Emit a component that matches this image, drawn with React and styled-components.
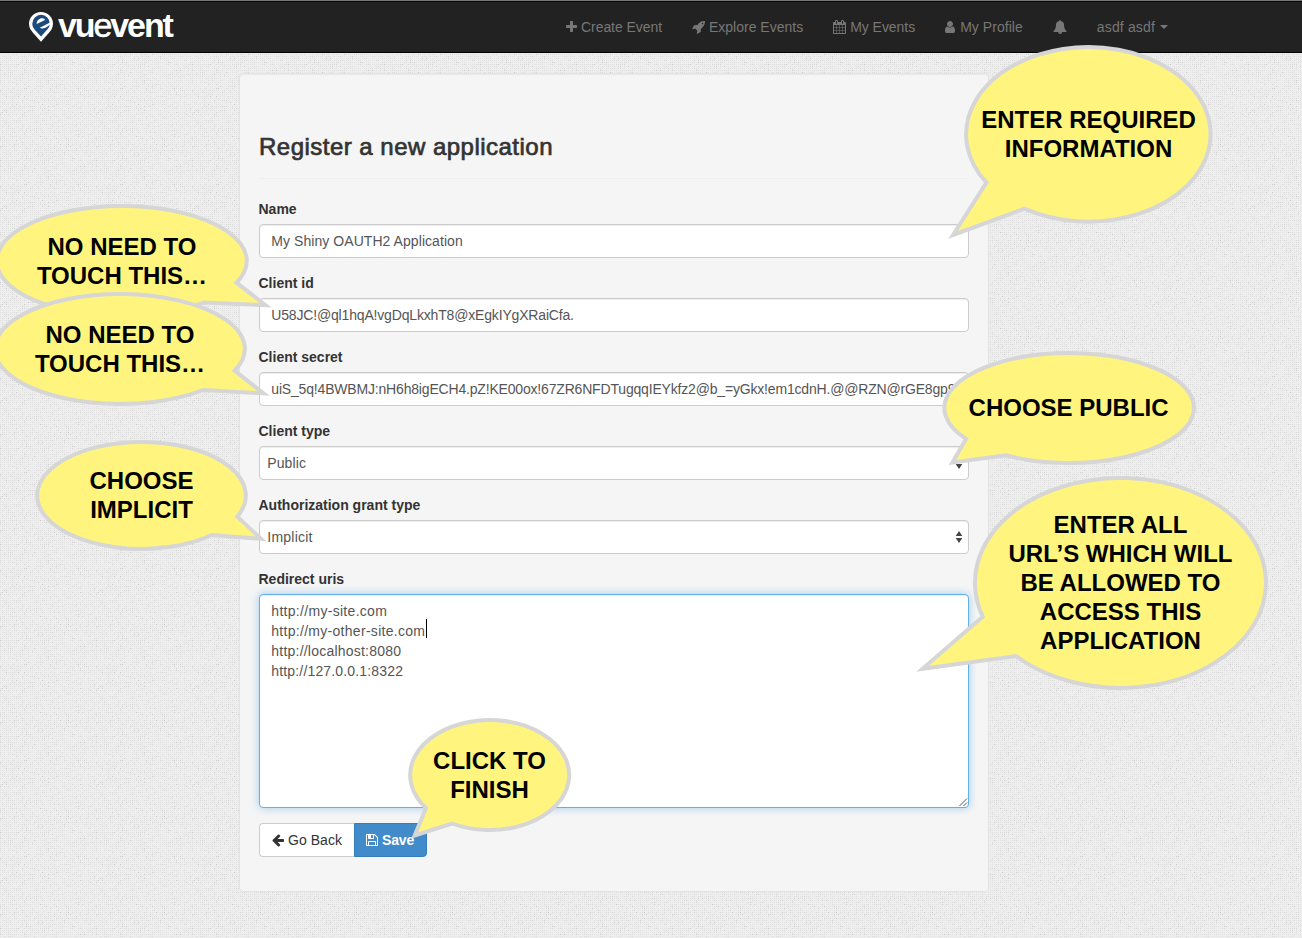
import React from "react";
import styled, { createGlobalStyle } from "styled-components";

const Global = createGlobalStyle`
  *, *::before, *::after { box-sizing: border-box; }
  html, body { margin: 0; padding: 0; }
  body {
    font-family: "Liberation Sans", Arial, sans-serif;
    font-size: 14px;
    line-height: 20px;
    color: #333;
    overflow: hidden;
  }
`;

const Page = styled.div`
  position: relative;
  width: 1302px;
  height: 938px;
  overflow: hidden;
  background: #eeeeee;
  isolation: isolate;
`;

const TextureLayer = styled.svg`
  position: absolute;
  inset: 0;
  z-index: -1;
  width: 100%;
  height: 100%;
`;

const Navbar = styled.header`
  display: flex;
  align-items: center;
  height: 53px;
  padding-left: 28px;
  background: #222;
  border-top: 1px solid #757775;
  border-bottom: 1px solid #000;
  box-shadow: inset 0 1px 0 #080808;
`;

const Brand = styled.div`
  display: flex;
  width: 523px;
  height: 34px;
  color: #fff;
`;

const LogoMark = styled.svg`
  width: 26px;
  height: 32px;
  margin-top: 1px;
`;

const BrandName = styled.div`
  margin-left: 4px;
  font-size: 34px;
  line-height: 30px;
  font-weight: 700;
  letter-spacing: -2.1px;
`;

const Thin = styled.span`
  font-weight: 400;
  -webkit-text-stroke: 0.5px #fff;
`;

const NavLink = styled.a`
  display: flex;
  align-items: center;
  padding: 0 15px;
  height: 50px;
  gap: 4px;
  color: #777;
  white-space: nowrap;
  letter-spacing: ${(p) => p.$ls || 0}px;
`;

const Glyph = styled.svg`
  display: block;
  flex: none;
  height: 14px;
  width: ${(p) => p.$w}px;
  fill: currentColor;
`;

const Caret = styled.i`
  border: 4px solid transparent;
  border-top-color: currentColor;
  border-bottom: 0;
  margin-left: 1px;
`;

const Well = styled.main`
  width: 750px;
  margin: 20px 0 0 239px;
  padding: 60px 19px 34px;
  background: #f5f5f5;
  border: 1px solid #e3e3e3;
  border-radius: 4px;
  box-shadow: inset 0 1px 1px rgba(0, 0, 0, 0.05);
`;

const Heading = styled.h3`
  margin: 0 0 20px;
  padding-bottom: 18px;
  border-bottom: 1px solid #eee;
  font-size: 24px;
  line-height: 26px;
  font-weight: 400;
  -webkit-text-stroke: 0.7px #333;
  letter-spacing: ${(p) => p.$ls || 0}px;
`;

const Field = styled.div`
  margin-bottom: 15px;
`;

const Label = styled.div`
  margin: 0 0 5px -0.5px;
  font-weight: 700;
  letter-spacing: ${(p) => p.$ls || 0}px;
`;

const Control = styled.div`
  display: flex;
  align-items: center;
  justify-content: space-between;
  height: 34px;
  padding: 0 ${(p) => (p.$select ? "5px 0 7.3px" : "11.3px")};
  overflow: hidden;
  white-space: nowrap;
  color: #555;
  background: #fff;
  border: 1px solid #ccc;
  border-radius: 4px;
  box-shadow: inset 0 1px 1px rgba(0, 0, 0, 0.075);
  letter-spacing: ${(p) => p.$ls || 0}px;
`;

const Area = styled.div`
  display: flex;
  justify-content: space-between;
  height: 214px;
  padding: 6px 0 0 11.3px;
  color: #555;
  background: #fff;
  border: 1px solid #66afe9;
  border-radius: 4px;
  box-shadow: inset 0 1px 1px rgba(0, 0, 0, 0.075), 0 0 8px rgba(102, 175, 233, 0.6);
`;

const UrlLine = styled.div`
  display: flex;
  letter-spacing: ${(p) => p.$ls || 0}px;
`;

const TextCursor = styled.span`
  width: 1px;
  height: 19px;
  margin: -2px 0 0 1px;
  background: #000;
`;

const Grip = styled.svg`
  align-self: flex-end;
  width: 9px;
  height: 9px;
  stroke: #555;
`;

const Buttons = styled.div`
  display: flex;
`;

const Button = styled.button`
  display: flex;
  align-items: center;
  justify-content: flex-start;
  gap: 4px;
  width: ${(p) => p.$w}px;
  height: 34px;
  padding: 0 0 0 ${(p) => (p.$primary ? 11 : 12)}px;
  font: inherit;
  font-weight: ${(p) => (p.$primary ? 700 : 400)};
  letter-spacing: ${(p) => p.$ls || 0}px;
  color: ${(p) => (p.$primary ? "#fff" : "#333")};
  background: ${(p) => (p.$primary ? "#428bca" : "#fff")};
  border: 1px solid ${(p) => (p.$primary ? "#357ebd" : "#ccc")};
  border-right-width: ${(p) => (p.$primary ? 1 : 0)}px;
  border-radius: ${(p) => (p.$primary ? "0 4px 4px 0" : "4px 0 0 4px")};
`;

const BubbleShape = styled.svg`
  position: absolute;
  inset: 0;
  width: 1302px;
  height: 938px;
  pointer-events: none;
  fill: #fff57e;
  stroke: #d6d6d6;
  stroke-width: 4px;
  stroke-miterlimit: 10;
`;

const BubbleText = styled.div`
  position: absolute;
  left: ${(p) => p.$x}px;
  top: ${(p) => p.$y}px;
  transform: translateX(-50%);
  font-size: 24px;
  line-height: 29px;
  font-weight: 700;
  color: #000;
  text-align: center;
  white-space: pre;
`;

const ICONS = {
  plus: [11, 192, "M1600 736v192q0 40-28 68t-68 28h-416v416q0 40-28 68t-68 28h-192q-40 0-68-28t-28-68v-416h-416q-40 0-68-28t-28-68v-192q0-40 28-68t68-28h416v-416q0-40 28-68t68-28h192q40 0 68 28t28 68v416h416q40 0 68 28t28 68z"],
  rocket: [13, 0, "M1440 448q0-40-28-68t-68-28-68 28-28 68 28 68 68 28 68-28 28-68zm224-288q0 249-75.500 430.500t-253.500 360.500q-81 80-195 176l-20 379q-2 16-16 26l-384 224q-7 4-16 4-12 0-23-9l-64-64q-13-14-8-32l85-276-281-281-276 85q-3 1-9 1-14 0-23-9l-64-64q-17-19-5-39l224-384q10-14 26-16l379-20q96-114 176-195 188-187 358-258t431-71q14 0 24 9.500t10 22.500z"],
  calendar: [13, 64, "M192 1664h288v-288h-288v288zm352 0h320v-288h-320v288zm-352-352h288v-320h-288v320zm352 0h320v-320h-320v320zm-352-384h288v-288h-288v288zm736 736h320v-288h-320v288zm-384-736h320v-288h-320v288zm768 736h288v-288h-288v288zm-384-352h320v-320h-320v320zm-352-864v-288q0-13-9.500-22.500t-22.500-9.500h-64q-13 0-22.500 9.500t-9.500 22.500v288q0 13 9.500 22.500t22.500 9.500h64q13 0 22.500-9.500t9.500-22.500zm736 864h288v-320h-288v320zm-384-384h320v-288h-320v288zm384 0h288v-288h-288v288zm32-480v-288q0-13-9.500-22.500t-22.500-9.500h-64q-13 0-22.500 9.500t-9.500 22.500v288q0 13 9.500 22.500t22.500 9.500h64q13 0 22.500-9.500t9.500-22.500zm384-64v1280q0 52-38 90t-90 38h-1408q-52 0-90-38t-38-90v-1280q0-52 38-90t90-38h128v-96q0-66 47-113t113-47h64q66 0 113 47t47 113v96h384v-96q0-66 47-113t113-47h64q66 0 113 47t47 113v96h128q52 0 90 38t38 90z"],
  user: [11, 256, "M1536 1399q0 109-62.500 187t-150.500 78h-854q-88 0-150.500-78t-62.500-187q0-85 8.500-160.500t31.500-152 58.500-131 94-89 134.500-34.500q131 128 313 128t313-128q76 0 134.500 34.500t94 89 58.500 131 31.500 152 8.500 160.500zm-256-887q0 159-112.500 271.500t-271.500 112.500-271.500-112.500-112.500-271.500 112.500-271.500 271.500-112.500 271.500 112.500 112.500 271.500z"],
  bell: [14, 0, "M912 1696q0-16-16-16-59 0-101.500-42.500t-42.500-101.500q0-16-16-16t-16 16q0 73 51.500 124.500t124.500 51.500q16 0 16-16zm816-288q0 52-38 90t-90 38h-448q0 106-75 181t-181 75-181-75-75-181h-448q-52 0-90-38t-38-90q50-42 91-88t85-119.500 74.500-158.500 50-206 19.500-260q0-152 117-282.500t307-158.500q-8-19-8-39 0-40 28-68t68-28 68 28 28 68q0 20-8 39 190 28 307 158.500t117 282.500q0 139 19.500 260t50 206 74.500 158.500 85 119.500 91 88z"],
  back: [12, 128, "M1664 896v128q0 53-32.500 90.500t-84.500 37.500h-704l293 294q38 36 38 90t-38 90l-75 76q-37 37-90 37-52 0-91-37l-651-652q-37-37-37-90 0-52 37-91l651-650q38-38 91-38 52 0 90 38l75 74q38 38 38 91t-38 91l-293 293h704q52 0 84.500 37.500t32.500 90.500z"],
  save: [12, 128, "M512 1536h768v-384h-768v384zm896 0h128v-896q0-14-10-38.500t-20-34.500l-281-281q-10-10-34-20t-39-10v416q0 40-28 68t-68 28h-576q-40 0-68-28t-28-68v-416h-128v1280h128v-416q0-40 28-68t68-28h832q40 0 68 28t28 68v416zm-384-928v-320q0-13-9.500-22.500t-22.500-9.500h-192q-13 0-22.500 9.500t-9.500 22.500v320q0 13 9.500 22.500t22.500 9.500h192q13 0 22.500-9.500t9.500-22.500zm640 32v928q0 40-28 68t-68 28h-1344q-40 0-68-28t-28-68v-1344q0-40 28-68t68-28h928q40 0 88 20t76 48l280 280q28 28 48 76t20 88z"],
};

function Icon({ name }) {
  const [w, x, d] = ICONS[name];
  return (
    <Glyph $w={w} viewBox={`${x} 0 ${w * 128} 1792`}>
      <path d={d} />
    </Glyph>
  );
}

/* Woven paper: a 2px lattice of single-pixel specks in four strengths. */
const TILE = 96;
const SHADES = [0.02, 0.05, 0.085, 0.15];
const specks = SHADES.map(() => "");
let seed = 7;
for (let y = 0; y < TILE; y += 2) {
  for (let x = 0; x < TILE; x += 2) {
    seed = (seed * 1103515245 + 12345) % 2147483648;
    const r = seed / 2147483648;
    const level = r < 0.3 ? 0 : r < 0.7 ? 1 : r < 0.94 ? 2 : 3;
    specks[level] += `M${x} ${y}h1v1h-1z`;
  }
}

function Texture() {
  return (
    <TextureLayer shapeRendering="crispEdges">
      <defs>
        <pattern id="weave" width={TILE} height={TILE} patternUnits="userSpaceOnUse">
          {specks.map((d, i) => <path key={i} d={d} fillOpacity={SHADES[i]} />)}
        </pattern>
      </defs>
      <rect width="100%" height="100%" fill="url(#weave)" />
    </TextureLayer>
  );
}

function Logo() {
  return (
    <LogoMark viewBox="0 0 26 32">
      <path d="M13 1C6.200 1 1 6.200 1 12.800c0 4 2 6.700 4.200 9.200L13 30.700l7.800-8.700c2.200-2.500 4.200-5.200 4.200-9.200C25 6.200 19.800 1 13 1z" fill="#fff" />
      <path d="M13.200 3.800a8.800 8.800 0 0 0-8.900 8.900c0 2.700 1.300 4.700 2.900 6.500L13 25.400l5.800-6.300c1.700-1.900 3-3.700 3-6.400a8.800 8.800 0 0 0-8.600-8.900z" fill="#1d4a7c" />
      <path d="M8.700 12.900C8.300 9.800 11.600 6.900 14.400 7.200c1.500.2 2.300.9 2.600 1.700z" fill="#fff" />
      <path d="M23 11 11.800 16.700c1.700 1.400 5.300.6 7.700-1.200L23 13z" fill="#fff" />
    </LogoMark>
  );
}

const Stepper = () => (
  <svg width="8" height="14" viewBox="0 0 8 14" fill="#444">
    <path d="M0.700 6 4 1l3.300 5zM0.700 8l3.300 5 3.300-5z" />
  </svg>
);

const BUBBLES = [
  { rx: 125, ry: 55, a: [236.5, 282.7], tip: [265.5, 305.3], b: [203.5, 302.5], x: 122, y: 232, text: "NO NEED TO\nTOUCH THIS…", right: true },
  { rx: 125, ry: 54.9, a: [234.7, 370.7], tip: [263.5, 393.3], b: [203, 390], x: 120, y: 320, text: "NO NEED TO\nTOUCH THIS…", right: true },
  { rx: 104.3, ry: 53.5, a: [237.3, 516.6], tip: [261, 538.8], b: [211.7, 535], x: 141.5, y: 466, text: "CHOOSE\nIMPLICIT", right: true },
  { rx: 122.2, ry: 87.3, a: [986.5, 182.6], tip: [953, 235], b: [1024.3, 208.7], x: 1088.5, y: 105, text: "ENTER REQUIRED\nINFORMATION" },
  { rx: 145.5, ry: 105, a: [982.7, 616.7], tip: [922.5, 668.8], b: [1016, 656], x: 1120.5, y: 510, text: "ENTER ALL\nURL’S WHICH WILL\nBE ALLOWED TO\nACCESS THIS\nAPPLICATION" },
  { rx: 124.8, ry: 55, a: [966, 438.9], tip: [952.5, 462.5], b: [1005.7, 455.3], x: 1068.6, y: 393, text: "CHOOSE PUBLIC" },
  { rx: 79.5, ry: 55, a: [426, 808], tip: [414.7, 835.5], b: [452, 823.5], x: 489.5, y: 746, text: "CLICK TO\nFINISH" },
];

function Bubble({ rx, ry, a, b, tip, x, y, text, right }) {
  return (
    <>
      <BubbleShape viewBox="0 0 1302 938">
        <path d={`M${a}A${rx} ${ry} 0 1 ${right ? 0 : 1} ${b}L${tip}Z`} />
      </BubbleShape>
      <BubbleText $x={x} $y={y}>{text}</BubbleText>
    </>
  );
}

export default function App() {
  return (
    <Page>
      <Global />
      <Texture />
      <Navbar>
        <Brand>
          <Logo />
          <BrandName>vu<Thin>e</Thin>vent</BrandName>
        </Brand>
        <NavLink $ls={-0.06}><Icon name="plus" /><span>Create Event</span></NavLink>
        <NavLink><Icon name="rocket" /><span>Explore Events</span></NavLink>
        <NavLink $ls={-0.04}><Icon name="calendar" /><span>My Events</span></NavLink>
        <NavLink $ls={0.04}><Icon name="user" /><span>My Profile</span></NavLink>
        <NavLink><Icon name="bell" /></NavLink>
        <NavLink $ls={0.15}><span>asdf asdf</span><Caret /></NavLink>
      </Navbar>
      <Well>
        <Heading $ls={0.48}>Register a new application</Heading>
        <Field>
          <Label>Name</Label>
          <Control $ls={0.06}>My Shiny OAUTH2 Application</Control>
        </Field>
        <Field>
          <Label>Client id</Label>
          <Control $ls={-0.17}>U58JC!@ql1hqA!vgDqLkxhT8@xEgkIYgXRaiCfa.</Control>
        </Field>
        <Field>
          <Label>Client secret</Label>
          <Control $ls={-0.18}>uiS_5q!4BWBMJ:nH6h8igECH4.pZ!KE00ox!67ZR6NFDTugqqIEYkfz2@b_=yGkx!em1cdnH.@@RZN@rGE8gp9</Control>
        </Field>
        <Field>
          <Label>Client type</Label>
          <Control $select $ls={0.1}>Public<Stepper /></Control>
        </Field>
        <Field>
          <Label>Authorization grant type</Label>
          <Control $select $ls={0.22}>Implicit<Stepper /></Control>
        </Field>
        <Field>
          <Label>Redirect uris</Label>
          <Area>
            <div>
              <UrlLine $ls={0.3}>http://my-site.com</UrlLine>
              <UrlLine $ls={0.29}>http://my-other-site.com<TextCursor /></UrlLine>
              <UrlLine $ls={0.22}>http://localhost:8080</UrlLine>
              <UrlLine $ls={0.16}>http://127.0.0.1:8322</UrlLine>
            </div>
            <Grip viewBox="0 0 9 9"><path d="M0.500 8 8 0.500M4.500 8 8 4.500" /></Grip>
          </Area>
        </Field>
        <Buttons>
          <Button $w={95} $ls={0.05}><Icon name="back" />Go Back</Button>
          <Button $w={73} $ls={-0.15} $primary><Icon name="save" />Save</Button>
        </Buttons>
      </Well>
      {BUBBLES.map((b, i) => <Bubble key={i} {...b} />)}
    </Page>
  );
}
